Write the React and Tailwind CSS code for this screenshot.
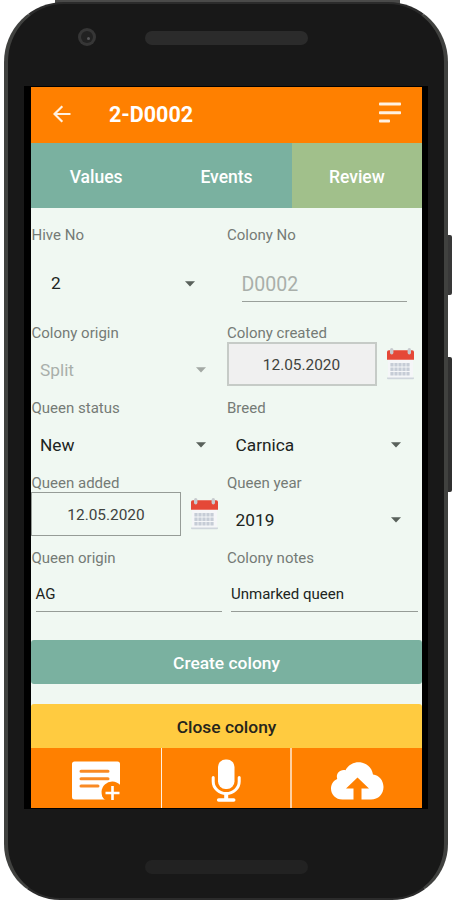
import React from 'react'

export default function App() {
  return (
    <div className="relative w-[454px] h-[900px] overflow-hidden bg-white font-['Roboto',sans-serif]">
      {/* Side buttons and top rim */}
      <div className="absolute left-[446px] top-[235px] w-[6px] h-[60px] rounded-r-xs bg-[#383838]" />
      <div className="absolute left-[446px] top-[357px] w-[6px] h-[135px] rounded-r-xs bg-[#303030]" />
      <div className="absolute left-[55px] top-0 w-[345px] h-[5px] bg-[#4a4a49]" />

      {/* Phone body */}
      <div className="absolute left-[4px] top-[2px] w-[444px] h-[898px] rounded-t-[60px] rounded-b-[56px] bg-[#181818]
                      border-x-4 border-t-2 border-b-2 border-x-[#40413f] border-t-[#2b2b2b] border-b-[#2b2b2b]
                      px-[16px] flex flex-col">
        <div className="relative h-[82px] shrink-0 flex justify-center">
          <Camera />
          <Speaker className="mt-[27px] bg-[#2b2b2b]" />
        </div>

        <div className="h-[723px] shrink-0 bg-black pt-px pb-px pl-[7px] pr-[6px]">
          <Screen />
        </div>

        <div className="flex justify-center">
          <Speaker className="mt-[51px] bg-[#222222]" />
        </div>
      </div>
    </div>
  )
}

function Camera() {
  return (
    <div className="absolute left-[54px] top-[24px] w-[18px] h-[18px] rounded-full bg-[#363636] flex items-center justify-center">
      <div className="w-[12px] h-[12px] rounded-full bg-[#222222] flex items-center justify-center">
        <div className="ml-[3px] mt-[3px] w-[3px] h-[3px] rounded-full bg-[#58585a]" />
      </div>
    </div>
  )
}

function Speaker({ className }) {
  return <div className={`w-[163px] h-[14px] rounded-full ${className}`} />
}

function Screen() {
  return (
    <div className="h-full flex flex-col bg-[#f0f8f2] text-[#202421]">
      <header className="h-[56px] shrink-0 flex items-center bg-[#ff8000] text-white pl-[22px] pr-[21px]">
        <svg className="-mt-[3px]" width="18" height="18" viewBox="0 0 18 18" fill="none" stroke="#fff1e2" strokeWidth="2.2">
          <path d="M17.5 9H2M9.3 1.2L1.5 9l7.8 7.8" />
        </svg>
        <h1 className="ml-[38px] -mt-px text-[21.5px] font-bold leading-none">2-D0002</h1>
        <svg className="ml-auto -mt-[4px]" width="22" height="22" viewBox="0 0 22 22" fill="#fff1e2">
          <rect x="0" y="0.5" width="22" height="3" rx="0.8" />
          <rect x="0" y="9.2" width="22" height="3" rx="0.8" />
          <rect x="0" y="17.5" width="11" height="3" rx="0.8" />
        </svg>
      </header>

      <nav className="h-[65px] shrink-0 grid grid-cols-3 text-white text-[17.5px] font-medium">
        <Tab>Values</Tab>
        <Tab>Events</Tab>
        <Tab active>Review</Tab>
      </nav>

      <div className="grid grid-cols-2 pt-[17px] h-[432px] shrink-0 content-start">
        <Field label="Hive No" tall>
          <Select value="2" className="pl-[20px] pr-[32px]" />
        </Field>
        <Field label="Colony No" tall>
          <div className="mx-[15px] mt-[21px] h-[36px] w-full border-b border-[#9aa09b] text-[19.5px] leading-[38px] text-[#a9afaa]">
            D0002
          </div>
        </Field>

        <Field label="Colony origin">
          <Select value="Split" disabled className="pl-[9px] pr-[21px]" />
        </Field>
        <Field label="Colony created">
          <DateInput value="12.05.2020" boxClass="bg-[#f0f0f0] border-2 border-[#c6cbc7]" />
        </Field>

        <Field label="Queen status">
          <Select value="New" className="pl-[9px] pr-[21px]" />
        </Field>
        <Field label="Breed">
          <Select value="Carnica" className="pl-[9px] pr-[21px]" />
        </Field>

        <Field label="Queen added">
          <DateInput value="12.05.2020" boxClass="border border-[#969c97]" />
        </Field>
        <Field label="Queen year">
          <Select value="2019" className="pl-[9px] pr-[21px]" />
        </Field>

        <Field label="Queen origin">
          <TextInput value="AG" />
        </Field>
        <Field label="Colony notes">
          <TextInput value="Unmarked queen" />
        </Field>
      </div>

      <button className="h-[44px] shrink-0 rounded-[3px] bg-[#7ab1a0] text-white text-[17.4px] font-medium pt-[3px]">
        Create colony
      </button>
      <button className="mt-[20px] h-[44px] shrink-0 rounded-t-[3px] bg-[#ffcb40] text-[#25241c] text-[17.4px] font-medium pt-[3px]">
        Close colony
      </button>

      <footer className="h-[60px] shrink-0 grid grid-cols-3 bg-[#ff8000] text-white">
        <div className="flex justify-center pt-[13px]">
          <NoteAddIcon />
        </div>
        <div className="flex justify-center pt-[11px] border-l border-r-2 border-l-[#fff0e0] border-r-[#ffd0a0]">
          <MicIcon />
        </div>
        <div className="flex justify-center pt-[13px]">
          <CloudUploadIcon />
        </div>
      </footer>
    </div>
  )
}

function Tab({ active, children }) {
  return (
    <div className={`flex items-center justify-center pt-[3px] ${active ? 'bg-[#a1c08b]' : 'bg-[#7ab1a0]'}`}>
      {children}
    </div>
  )
}

function Field({ label, tall, children }) {
  return (
    <div className={`flex flex-col ${tall ? 'h-[98px]' : 'h-[75px]'}`}>
      <div className="h-[20px] shrink-0 pl-[0.5px] text-[15px] leading-[21px] text-[#757b76]">{label}</div>
      <div className="flex-1 flex">{children}</div>
    </div>
  )
}

function Select({ value, disabled, className }) {
  return (
    <div className={`w-full flex items-center justify-between text-[17.3px] ${disabled ? 'text-[#a9afaa]' : ''} ${className}`}>
      <span>{value}</span>
      <svg className="-mt-px" width="10" height="6" viewBox="0 0 10 6" fill={disabled ? '#a3a9a4' : '#59615b'}>
        <path d="M0 0.3h10L5 5.6z" />
      </svg>
    </div>
  )
}

function DateInput({ value, boxClass }) {
  return (
    <div className="flex -mt-px">
      <div className={`w-[150px] h-[44px] flex items-center justify-center text-[15.4px] text-[#3f4340] pt-[4px] ${boxClass}`}>
        {value}
      </div>
      <CalendarIcon />
    </div>
  )
}

function TextInput({ value }) {
  return (
    <div className="w-full mx-[4.5px] h-[44px] pt-[9px] border-b border-[#969c97] text-[15px] leading-[35px]">
      {value}
    </div>
  )
}

function CalendarIcon() {
  const cols = [4, 8, 12, 16, 20]
  const rows = [17, 21.5, 26]
  return (
    <svg className="ml-[10px] mt-[5px]" width="27" height="34" viewBox="0 0 27 34">
      <rect x="1" y="12" width="25" height="19" fill="#f5f6f8" />
      <path d="M0 30.5h27v0.8q0 1-1 1H1q-1 0-1-1z" fill="#cfd5dc" />
      <path d="M0 5q0-1.8 1.8-1.8h23.4Q27 3.2 27 5v7.8H0z" fill="#e54837" />
      <rect x="3" y="1" width="3.4" height="6.5" rx="1.7" fill="#c7cace" />
      <rect x="20.6" y="1" width="3.4" height="6.5" rx="1.7" fill="#c7cace" />
      {rows.map(y => cols.map(x => (
        <rect key={`${x}-${y}`} x={x - 0.6} y={y - 1} width="3.2" height="3.5" fill="#c6ccd6" />
      )))}
    </svg>
  )
}

function NoteAddIcon() {
  return (
    <svg width="50" height="42" viewBox="0 0 50 42">
      <rect x="1" y="0.5" width="48" height="38" rx="2.5" fill="#fff" />
      <g stroke="#f98a24" strokeWidth="3" strokeLinecap="round">
        <path d="M10 10.2h27M10 17.7h27M10 25h17" />
      </g>
      <path d="M49 23.8A10 10 0 1 0 33.5 38.6L42 42l8-3z" fill="#ff8000" />
      <path d="M41.5 25v14M34.5 32h14" stroke="#fff" strokeWidth="2.6" />
    </svg>
  )
}

function MicIcon() {
  return (
    <svg width="32" height="44" viewBox="0 0 32 44">
      <rect x="8" y="0.5" width="16.5" height="29.5" rx="7.5" fill="#fff" />
      <path d="M3.2 18.5v4a13 12 0 0 0 26 0v-4" fill="none" stroke="#fff" strokeWidth="3" strokeLinecap="round" />
      <path d="M16.2 34v6" stroke="#fff" strokeWidth="4" />
      <path d="M8.7 41h15" stroke="#fff" strokeWidth="3.6" strokeLinecap="round" />
    </svg>
  )
}

function CloudUploadIcon() {
  return (
    <svg width="54" height="40" viewBox="0 0 54 40">
      <path
        d="M12.5 38.5C5.5 38.5 1 33.5 1 27.5c0-4.5 2.5-8 6.2-9.6C5.5 12 10.5 8 15.5 9.2 18 4.500 23 1.3 28.5 1.3c7.5 0 13.500 5.2 14.5 12.2C49 14.2 53.5 19.5 53.5 26c0 7-5.2 12.5-12.5 12.5z"
        fill="#fff"
      />
      <path d="M27.5 16.5L39 27.5h-7.5V40h-8V27.5H16z" fill="#ff8000" />
    </svg>
  )
}
